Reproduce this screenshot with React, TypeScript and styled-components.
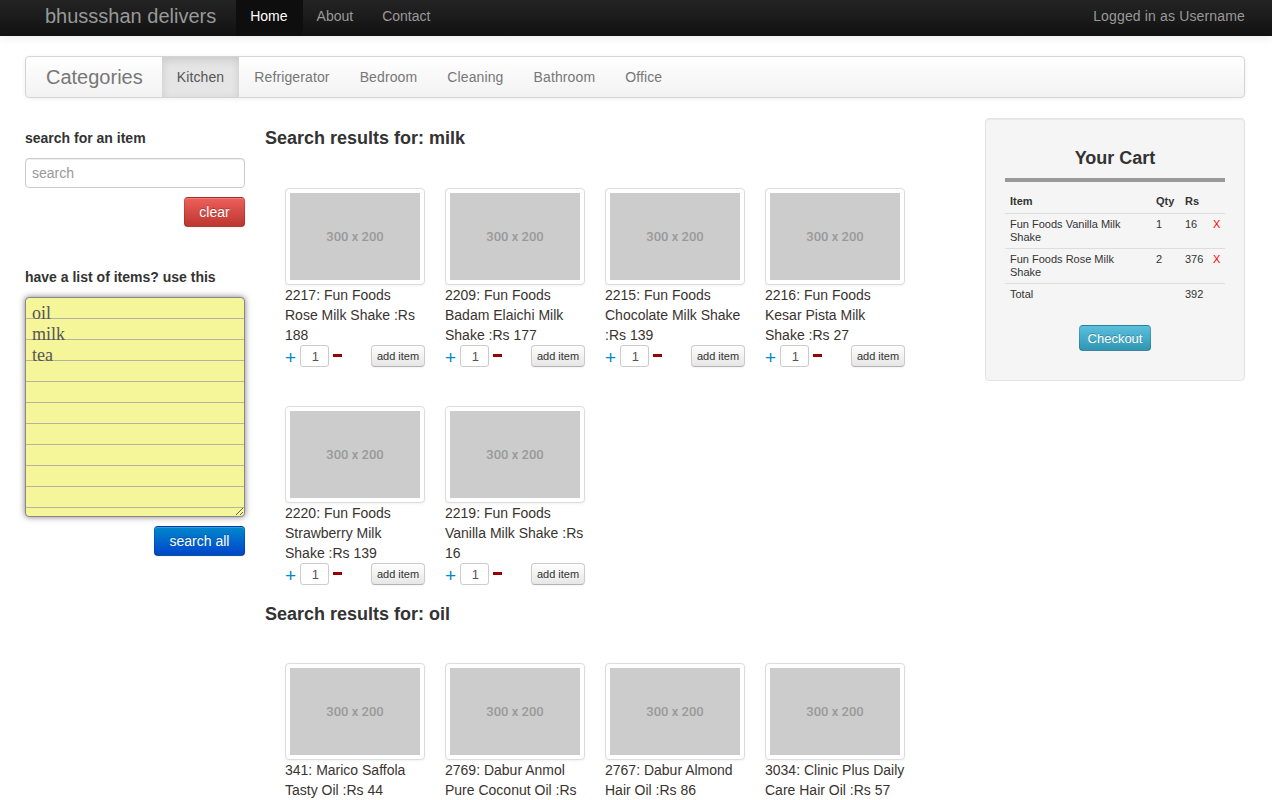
import React from "react";
import styled, { createGlobalStyle } from "styled-components";

const Global = createGlobalStyle`
  html, body { margin: 0; padding: 0; background: #fff; }
  body {
    font-family: "Liberation Sans", Arial, sans-serif;
    font-size: 14px;
    line-height: 20px;
    color: #333;
  }
  * { box-sizing: border-box; }
`;

const Navbar = styled.div`
  height: 36px;
  background: linear-gradient(#242424, #111);
  box-shadow: 0 1px 10px rgba(0, 0, 0, 0.1);
  display: flex;
  align-items: stretch;
  padding: 0 27px 0 45px;
`;

const Brand = styled.div`
  font-size: 20px;
  color: #999;
  display: flex;
  align-items: center;
  padding-bottom: 4px;
  margin-right: 20px;
`;

const NavLink = styled.a<{ $active?: boolean }>`
  display: flex;
  align-items: center;
  padding: 0 15px 4px 14px;
  color: ${(p) => (p.$active ? "#fff" : "#999")};
  background: ${(p) => (p.$active ? "#0e0e0e" : "transparent")};
  text-decoration: none;
  font-size: 14px;
`;

const NavRight = styled.div`
  margin-left: auto;
  color: #999;
  display: flex;
  align-items: center;
  padding-bottom: 4px;
  letter-spacing: 0.15px;
`;

const Container = styled.div`
  width: 1220px;
  margin: 20px 0 0 25px;
`;

const CatBar = styled.div`
  height: 42px;
  border: 1px solid #d4d4d4;
  border-radius: 4px;
  background: linear-gradient(#fff, #f2f2f2);
  box-shadow: 0 1px 4px rgba(0, 0, 0, 0.065);
  display: flex;
  align-items: stretch;
`;

const CatBrand = styled.div`
  font-size: 20px;
  color: #777;
  padding: 0 19px 0 20px;
  display: flex;
  align-items: center;
`;

const CatLink = styled.div<{ $active?: boolean }>`
  display: flex;
  align-items: center;
  padding: 0 15px;
  letter-spacing: 0.12px;
  color: ${(p) => (p.$active ? "#555" : "#777")};
  background: ${(p) => (p.$active ? "#e5e5e5" : "transparent")};
  box-shadow: ${(p) => (p.$active ? "inset 0 3px 8px rgba(0,0,0,0.125)" : "none")};
`;

const Row = styled.div`
  display: grid;
  grid-template-columns: 220px 700px 260px;
  column-gap: 20px;
  margin-top: 20px;
  align-items: start;
`;

const Sidebar = styled.div`
  display: flex;
  flex-direction: column;
`;

const Label = styled.div<{ $top: number }>`
  font-weight: bold;
  margin-top: ${(p) => p.$top}px;
`;

const SearchInput = styled.input`
  margin-top: 10px;
  width: 220px;
  height: 30px;
  border: 1px solid #ccc;
  border-radius: 4px;
  padding: 4px 6px;
  font-family: inherit;
  font-size: 14px;
  color: #555;
  box-shadow: inset 0 1px 1px rgba(0, 0, 0, 0.075);
  &::placeholder { color: #999; }
`;

const Btn = styled.button<{ $from: string; $to: string; $w: number; $h: number }>`
  align-self: flex-end;
  margin-top: 9px;
  width: ${(p) => p.$w}px;
  height: ${(p) => p.$h}px;
  border-radius: 4px;
  border: 1px solid rgba(0, 0, 0, 0.15);
  border-bottom-color: rgba(0, 0, 0, 0.3);
  background: linear-gradient(${(p) => p.$from}, ${(p) => p.$to});
  color: #fff;
  font-family: inherit;
  font-size: 14px;
  text-shadow: 0 -1px 0 rgba(0, 0, 0, 0.25);
  box-shadow: inset 0 1px 0 rgba(255, 255, 255, 0.2), 0 1px 2px rgba(0, 0, 0, 0.05);
  padding: 0;
`;

const Notepad = styled.textarea`
  margin-top: 10px;
  width: 220px;
  height: 220px;
  border: 1px solid #888;
  border-radius: 4px;
  padding: 5px 6px 3px;
  font-family: "Liberation Serif", "Times New Roman", serif;
  font-size: 18px;
  line-height: 21px;
  color: #555;
  background-color: #f5f599;
  background-image: repeating-linear-gradient(
    to bottom,
    transparent 0px,
    transparent 20px,
    #b4b4a0 20px,
    #b4b4a0 21px
  );
  background-attachment: local;
  box-shadow: 0 0 6px rgba(0, 0, 0, 0.5);
  resize: both;
  outline: none;
`;

const Main = styled.div`
  display: flex;
  flex-direction: column;
`;

const SectionTitle = styled.h3<{ $top: number }>`
  margin: ${(p) => p.$top}px 0 0 0;
  font-size: 18px;
  line-height: 20px;
  font-weight: bold;
`;

const Grid = styled.div<{ $top: number }>`
  display: grid;
  grid-template-columns: repeat(4, 140px);
  column-gap: 20px;
  row-gap: 39px;
  padding-left: 20px;
  margin-top: ${(p) => p.$top}px;
`;

const Card = styled.div`
  display: flex;
  flex-direction: column;
`;

const Thumb = styled.div`
  padding: 4px;
  border: 1px solid #ddd;
  border-radius: 4px;
  box-shadow: 0 1px 3px rgba(0, 0, 0, 0.055);
  background: #fff;
`;

const Placeholder = styled.div`
  height: 87px;
  background: #ccc;
  color: #999;
  font-family: "Roboto", "DejaVu Sans Condensed", sans-serif;
  font-weight: 500;
  font-size: 13px;
  letter-spacing: 0;
  display: flex;
  align-items: center;
  justify-content: center;
`;

const CardText = styled.div`
  font-size: 14px;
  line-height: 20px;
  color: #3a3330;
`;

const Controls = styled.div`
  display: flex;
  align-items: center;
  height: 22px;
`;

const Plus = styled.span`
  color: #0088cc;
  font-size: 19px;
  width: 15px;
  padding-top: 3px;
`;

const QtyInput = styled.input`
  width: 29px;
  height: 22px;
  border: 1px solid #ccc;
  border-radius: 3px;
  font-family: inherit;
  font-size: 13px;
  color: #555;
  text-align: right;
  padding: 0 9px 0 0;
`;

const Minus = styled.span`
  display: inline-block;
  width: 9px;
  height: 3px;
  background: #990000;
  margin: 0 0 2px 4px;
`;

const AddBtn = styled.button`
  margin-left: auto;
  width: 54px;
  height: 22px;
  border: 1px solid #ccc;
  border-bottom-color: #b3b3b3;
  border-radius: 4px;
  background: linear-gradient(#fff, #e6e6e6);
  font-family: inherit;
  font-size: 11px;
  color: #333;
  padding: 0;
  box-shadow: inset 0 1px 0 rgba(255, 255, 255, 0.2), 0 1px 2px rgba(0, 0, 0, 0.05);
`;

const Cart = styled.div`
  background: #f5f5f5;
  border: 1px solid #e3e3e3;
  border-radius: 4px;
  box-shadow: inset 0 1px 1px rgba(0, 0, 0, 0.05);
  padding: 29px 19px 29px;
  display: flex;
  flex-direction: column;
`;

const CartTitle = styled.h3`
  margin: 0;
  text-align: center;
  font-size: 18px;
  line-height: 20px;
  font-weight: bold;
`;

const CartRule = styled.div`
  height: 4px;
  background: #999;
  margin-top: 10px;
`;

const Table = styled.table`
  width: 100%;
  border-collapse: collapse;
  table-layout: fixed;
  font-size: 11px;
  line-height: 13px;
`;

const Th = styled.th<{ $w?: number }>`
  text-align: left;
  padding: 13px 5px 5px;
  width: ${(p) => (p.$w ? `${p.$w}px` : "auto")};
  border-bottom: 1px solid #ddd;
`;

const Td = styled.td<{ $red?: boolean; $last?: boolean }>`
  vertical-align: top;
  padding: 4px 5px 4px;
  color: ${(p) => (p.$red ? "#f00" : "#333")};
  border-bottom: ${(p) => (p.$last ? "none" : "1px solid #ddd")};
`;

const CheckoutBtn = styled.button`
  align-self: center;
  margin-top: 20px;
  width: 72px;
  height: 26px;
  border-radius: 4px;
  border: 1px solid rgba(0, 0, 0, 0.15);
  border-bottom-color: rgba(0, 0, 0, 0.3);
  background: linear-gradient(#5bc0de, #2f96b4);
  color: #fff;
  font-family: inherit;
  font-size: 13px;
  text-shadow: 0 -1px 0 rgba(0, 0, 0, 0.25);
  padding: 0;
`;

type Product = { text: string };

const milk: Product[] = [
  { text: "2217: Fun Foods Rose Milk Shake :Rs 188" },
  { text: "2209: Fun Foods Badam Elaichi Milk Shake :Rs 177" },
  { text: "2215: Fun Foods Chocolate Milk Shake :Rs 139" },
  { text: "2216: Fun Foods Kesar Pista Milk Shake :Rs 27" },
  { text: "2220: Fun Foods Strawberry Milk Shake :Rs 139" },
  { text: "2219: Fun Foods Vanilla Milk Shake :Rs 16" },
];

const oil: Product[] = [
  { text: "341: Marico Saffola Tasty Oil :Rs 44" },
  { text: "2769: Dabur Anmol Pure Coconut Oil :Rs 120" },
  { text: "2767: Dabur Almond Hair Oil :Rs 86" },
  { text: "3034: Clinic Plus Daily Care Hair Oil :Rs 57" },
];

const ProductCard = ({ p }: { p: Product }) => (
  <Card>
    <Thumb>
      <Placeholder>300 x 200</Placeholder>
    </Thumb>
    <CardText>{p.text}</CardText>
    <Controls>
      <Plus>+</Plus>
      <QtyInput defaultValue="1" />
      <Minus />
      <AddBtn>add item</AddBtn>
    </Controls>
  </Card>
);

export default function App() {
  return (
    <>
      <Global />
      <Navbar>
        <Brand>bhussshan delivers</Brand>
        <NavLink $active>Home</NavLink>
        <NavLink>About</NavLink>
        <NavLink>Contact</NavLink>
        <NavRight>Logged in as Username</NavRight>
      </Navbar>
      <Container>
        <CatBar>
          <CatBrand>Categories</CatBrand>
          <CatLink $active>Kitchen</CatLink>
          <CatLink>Refrigerator</CatLink>
          <CatLink>Bedroom</CatLink>
          <CatLink>Cleaning</CatLink>
          <CatLink>Bathroom</CatLink>
          <CatLink>Office</CatLink>
        </CatBar>
        <Row>
          <Sidebar>
            <Label $top={10}>search for an item</Label>
            <SearchInput placeholder="search" />
            <Btn $from="#ee5f5b" $to="#bd362f" $w={61} $h={30}>
              clear
            </Btn>
            <Label $top={40}>have a list of items? use this</Label>
            <Notepad defaultValue={"oil\nmilk\ntea"} />
            <Btn $from="#0088cc" $to="#0044cc" $w={91} $h={30}>
              search all
            </Btn>
          </Sidebar>
          <Main>
            <SectionTitle $top={10}>Search results for: milk</SectionTitle>
            <Grid $top={40}>
              {milk.map((p) => (
                <ProductCard key={p.text} p={p} />
              ))}
            </Grid>
            <SectionTitle $top={19}>Search results for: oil</SectionTitle>
            <Grid $top={39}>
              {oil.map((p) => (
                <ProductCard key={p.text} p={p} />
              ))}
            </Grid>
          </Main>
          <Cart>
            <CartTitle>Your Cart</CartTitle>
            <CartRule />
            <Table>
              <thead>
                <tr>
                  <Th>Item</Th>
                  <Th $w={29}>Qty</Th>
                  <Th $w={28}>Rs</Th>
                  <Th $w={17}></Th>
                </tr>
              </thead>
              <tbody>
                <tr>
                  <Td>Fun Foods Vanilla Milk Shake</Td>
                  <Td>1</Td>
                  <Td>16</Td>
                  <Td $red>X</Td>
                </tr>
                <tr>
                  <Td>Fun Foods Rose Milk Shake</Td>
                  <Td>2</Td>
                  <Td>376</Td>
                  <Td $red>X</Td>
                </tr>
                <tr>
                  <Td $last>Total</Td>
                  <Td $last></Td>
                  <Td $last>392</Td>
                  <Td $last></Td>
                </tr>
              </tbody>
            </Table>
            <CheckoutBtn>Checkout</CheckoutBtn>
          </Cart>
        </Row>
      </Container>
    </>
  );
}
